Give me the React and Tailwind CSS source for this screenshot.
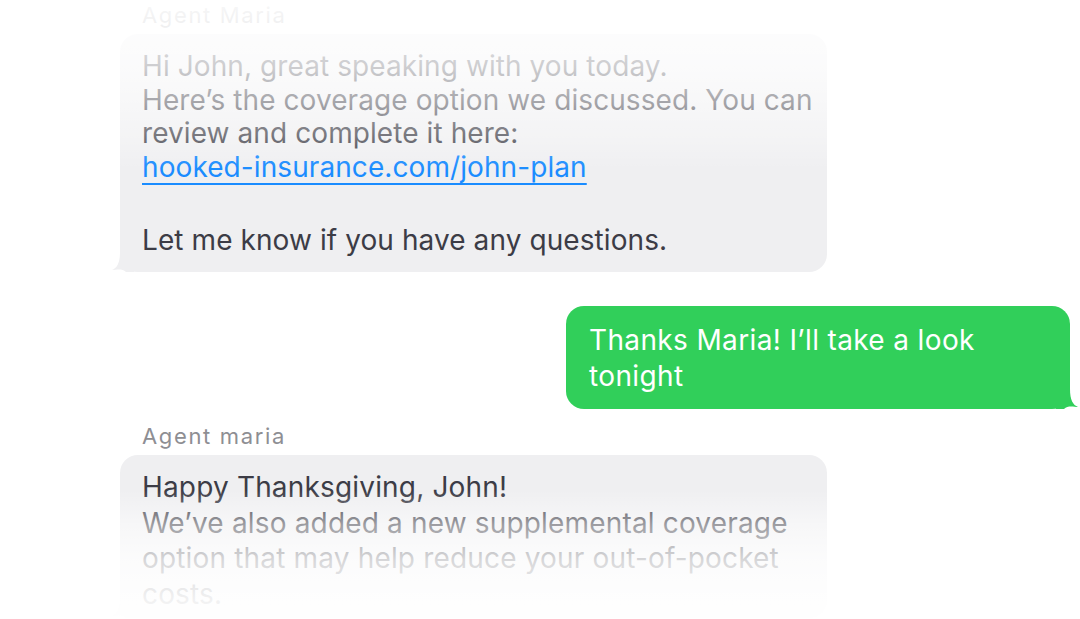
import React from "react";

function LeftTail({ className }) {
  return (
    <svg className={className} width="22" height="20" viewBox="0 0 22 20">
      <path d="M22 0 L22 20 L14 20 C10 16 4 18 0 18 C5 16 8 11 8 0 Z" fill="#efeff1" />
    </svg>
  );
}

function RightTail({ className }) {
  return (
    <svg className={className} width="22" height="20" viewBox="0 0 22 20">
      <path d="M0 0 L0 20 L8 20 C12 16 18 18 22 18 C17 16 14 11 14 0 Z" fill="#31cf5a" />
    </svg>
  );
}

export default function App() {
  return (
    <div
      className="relative w-[1080px] h-[619px] overflow-hidden bg-white"
      style={{ fontFamily: "Inter, 'Noto Sans', sans-serif" }}
    >
      <div className="flex flex-col">
        <div className="pl-[120px] flex flex-col items-start">
          <div className="ml-[22px] mt-[3px] text-[22px] leading-[24px] tracking-[0.075em] text-[#8e8e93]">
            Agent Maria
          </div>
          <div className="relative mt-[7px] w-[707px] rounded-[18px] bg-[#efeff1] pl-[22px] pr-[8px] pt-[16px] pb-[15px] text-[28px] tracking-[0.003em] text-[#3c3c46] whitespace-nowrap">
            <div className="leading-[33.5px]">
              <div>Hi John, great speaking with you today.</div>
              <div>Here’s the coverage option we discussed. You can</div>
              <div>review and complete it here:</div>
              <div className="text-[#1a8cff] underline decoration-[1.5px] underline-offset-[6px]">
                hooked-insurance.com/john-plan
              </div>
            </div>
            <div className="mt-[39px] leading-[34px]">Let me know if you have any questions.</div>
            <LeftTail className="absolute -left-[8px] bottom-0" />
          </div>
        </div>

        <div className="mt-[34px] flex justify-end pr-[10px]">
          <div className="relative w-[504px] rounded-[18px] bg-[#31cf5a] pl-[23px] pr-[20px] pt-[16px] pb-[15px] text-[28px] leading-[36px] tracking-[0.013em] text-white whitespace-nowrap">
            <div>Thanks Maria! I’ll take a look</div>
            <div>tonight</div>
            <RightTail className="absolute -right-[8px] bottom-0" />
          </div>
        </div>

        <div className="pl-[120px] flex flex-col items-start">
          <div className="ml-[22px] mt-[15px] text-[22px] leading-[24px] tracking-[0.075em] text-[#8e8e93]">
            Agent maria
          </div>
          <div className="relative mt-[7px] w-[707px] rounded-[18px] bg-[#efeff1] pl-[22px] pr-[8px] pt-[15px] pb-[6px] text-[28px] leading-[35.5px] tracking-[0.006em] text-[#3c3c46] whitespace-nowrap">
            <div>Happy Thanksgiving, John!</div>
            <div>We’ve also added a new supplemental coverage</div>
            <div>option that may help reduce your out-of-pocket</div>
            <div>costs.</div>
            <LeftTail className="absolute -left-[8px] bottom-0" />
          </div>
        </div>
      </div>

      <div className="pointer-events-none absolute left-0 top-0 h-[170px] w-full bg-[linear-gradient(to_bottom,rgba(255,255,255,0.94)_0%,rgba(255,255,255,0.74)_40%,rgba(255,255,255,0.54)_60%,rgba(255,255,255,0.3)_80%,rgba(255,255,255,0)_100%)]" />
      <div className="pointer-events-none absolute left-0 top-[490px] h-[129px] w-full bg-[linear-gradient(to_bottom,rgba(255,255,255,0)_0%,rgba(255,255,255,0.5)_27%,rgba(255,255,255,0.8)_55%,rgba(255,255,255,0.93)_85%,rgba(255,255,255,0.95)_100%)]" />
    </div>
  );
}
